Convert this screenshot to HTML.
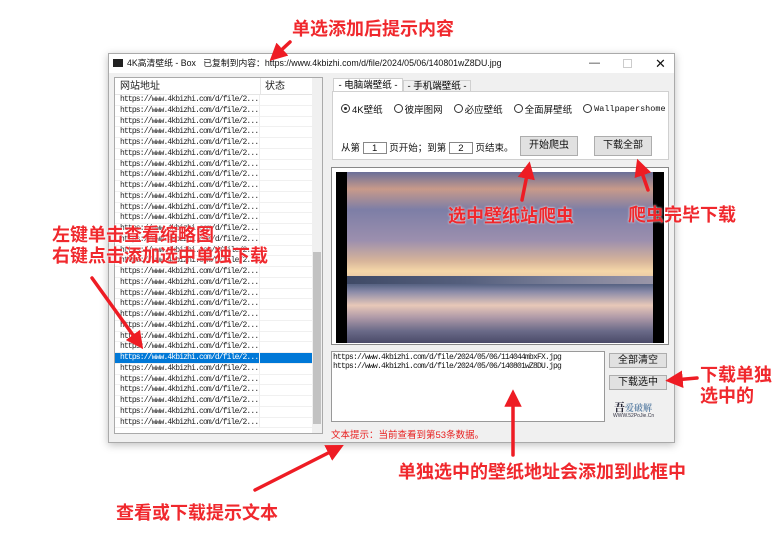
<!DOCTYPE html>
<html><head><meta charset="utf-8"><style>
*{margin:0;padding:0;box-sizing:border-box}
body{width:779px;height:540px;background:#fff;position:relative;overflow:hidden;font-family:"Liberation Sans","Noto Sans CJK SC",sans-serif}
.abs{position:absolute}
.win{left:108px;top:53px;width:567px;height:390px;background:#f0f0f0;border:1px solid #aaa;box-shadow:0 2px 8px rgba(0,0,0,.25)}
.tb{left:0;top:0;width:565px;height:19px;background:#fff;font-size:8.8px;color:#111;line-height:19px;white-space:nowrap}
.list{left:5px;top:23px;width:209px;height:357px;background:#fff;border:1px solid #aaa;overflow:hidden}
.row{height:10.75px;font-family:"Liberation Mono","Noto Sans CJK SC",monospace;font-size:8px;letter-spacing:-0.85px;line-height:10.75px;color:#222;padding-left:5px;width:197px;position:relative;border-bottom:1px solid #f0f0f0;white-space:nowrap;overflow:hidden}
.row:after{content:"";position:absolute;left:144px;top:0;bottom:0;border-left:1px solid #eee}
.sel{background:#0078d7;color:#fff}
.btn{background:#e1e1e1;border:1px solid #adadad;font-size:10px;text-align:center;color:#111}
.red{color:#f0282d;font-weight:bold;font-size:18px;font-family:"Noto Sans CJK SC",sans-serif;text-shadow:0 0 2px #fff;line-height:20px;white-space:nowrap}
.rad{font-size:9.5px;color:#111;display:inline-flex;align-items:center;margin-right:11px}
.rad i{display:inline-block;width:9px;height:9px;border:1px solid #333;border-radius:50%;margin-right:2px;position:relative}
.rad i.on:after{content:"";position:absolute;left:2px;top:2px;width:3px;height:3px;background:#333;border-radius:50%}
</style></head><body>
<div class="abs win">
 <div class="abs tb"><span style="display:inline-block;width:10px;height:8px;background:#222;margin:0 4px 0 4px;vertical-align:-1px"></span>4K高清壁纸 - Box &nbsp; 已复制到内容：https://www.4kbizhi.com/d/file/2024/05/06/140801wZ8DU.jpg
  <span class="abs" style="left:480px;top:0;color:#333;font-size:11px">—</span><span class="abs" style="left:514px;top:5px;width:9px;height:9px;border:1px solid #ccc"></span><span class="abs" style="left:546px;top:0;font-size:13px">✕</span></div>
 <div class="abs list">
  <div style="height:17px;font-size:10px;line-height:17px;color:#222;padding-left:5px;border-bottom:1px solid #e5e5e5;position:relative;width:197px">网站地址<span class="abs" style="left:150px;top:0">状态</span><span class="abs" style="left:145px;top:0;bottom:0;border-left:1px solid #e5e5e5"></span></div>
  <div id="rows"></div>
  <div class="abs" style="right:0;top:0;width:10px;height:355px;background:#f0f0f0"><div class="abs" style="left:1px;top:174px;width:8px;height:172px;background:#c2c2c2"></div></div>
 </div>
 <div class="abs" style="left:224px;top:24px;width:70px;height:14px;background:#fff;border:1px solid #d0d0d0;border-bottom:none;font-size:9.5px;text-align:center;line-height:13px">- 电脑端壁纸 -</div>
 <div class="abs" style="left:294px;top:26px;width:68px;height:12px;background:#f0f0f0;border:1px solid #d0d0d0;font-size:9.5px;text-align:center;line-height:11px">- 手机端壁纸 -</div>
 <div class="abs" style="left:223px;top:37px;width:337px;height:69px;background:#fff;border:1px solid #d0d0d0">
  <div class="abs" style="left:8px;top:8px;white-space:nowrap"><span class="rad"><i class="on"></i>4K壁纸</span><span class="rad"><i></i>彼岸图网</span><span class="rad"><i></i>必应壁纸</span><span class="rad"><i></i>全面屏壁纸</span><span class="rad" style="font-family:'Liberation Mono',monospace;font-size:8.5px"><i></i>Wallpapershome</span></div>
  <div class="abs" style="left:8px;top:48px;font-size:9.5px;color:#111;white-space:nowrap">从第 <span style="display:inline-block;width:24px;height:12px;border:1px solid #888;text-align:center;line-height:11px">1</span> 页开始；到第 <span style="display:inline-block;width:24px;height:12px;border:1px solid #888;text-align:center;line-height:11px">2</span> 页结束。</div>
  <div class="abs btn" style="left:187px;top:44px;width:58px;height:20px;line-height:18px">开始爬虫</div>
  <div class="abs btn" style="left:261px;top:44px;width:58px;height:20px;line-height:18px">下载全部</div>
 </div>
 <div class="abs" style="left:222px;top:113px;width:338px;height:178px;border:1px solid #888;background:#fff">
  <div class="abs" style="left:4px;top:4px;width:328px;height:171px;background:#000">
   <div class="abs" style="left:11px;top:0;width:306px;height:171px;background:linear-gradient(180deg,#6a6f98 0%,#c89a8a 10%,#7d7ea6 22%,#9c8fae 40%,#d7b49a 52%,#f5d7a8 58%,#e9c9a6 62%,#4e5878 62.5%,#5a6585 66%,#8a8aa8 70%,#e8c8b8 78%,#b09aa8 85%,#6a6a88 93%,#4a4a68 100%)"></div>
   <div class="abs" style="left:11px;top:104px;width:306px;height:8px;background:linear-gradient(90deg,#3f4a66,#56607e 40%,#7a7f98 70%,#9a96a8)"></div>
  </div>
 </div>
 <div class="abs" style="left:222px;top:297px;width:274px;height:71px;background:#fff;border:1px solid #999;font-family:'Liberation Mono',monospace;font-size:8px;letter-spacing:-0.8px;line-height:8.5px;padding:2px 1px;color:#111;white-space:nowrap;overflow:hidden">https://www.4kbizhi.com/d/file/2024/05/06/114044mbxFX.jpg<br>https://www.4kbizhi.com/d/file/2024/05/06/140801wZ8DU.jpg</div>
 <div class="abs btn" style="left:500px;top:299px;width:58px;height:15px;line-height:13px">全部清空</div>
 <div class="abs btn" style="left:500px;top:321px;width:58px;height:15px;line-height:13px">下载选中</div>
 <div class="abs" style="left:505px;top:345px;font-size:11px;color:#223;font-weight:bold;font-family:'Noto Serif CJK SC',serif">吾<span style="color:#68a;font-size:9px">爱破解</span></div>
 <div class="abs" style="left:504px;top:359px;font-size:5px;color:#334">WWW.52PoJie.Cn</div>
 <div class="abs" style="left:222px;top:373px;font-size:9.5px;color:#e82020">文本提示：当前查看到第53条数据。</div>
</div>
<script>
var h="";for(var i=0;i<31;i++){h+='<div class="row'+(i==24?' sel':'')+'">https://www.4kbizhi.com/d/file/2...</div>'}document.getElementById("rows").innerHTML=h;
</script>
<svg class="abs" style="left:0;top:0" width="779" height="540">
<defs><marker id="a" markerWidth="5" markerHeight="5" refX="2.5" refY="2.5" orient="auto"><path d="M0,0 L5,2.5 L0,5 Z" fill="#ee1c24"/></marker></defs>
<g stroke="#ee1c24" stroke-width="3.5" stroke-linecap="round" marker-end="url(#a)">
<line x1="290" y1="42" x2="276" y2="55"/>
<line x1="522" y1="200" x2="528" y2="170"/>
<line x1="648" y1="190" x2="640" y2="167"/>
<line x1="92" y1="278" x2="138" y2="342"/>
<line x1="697" y1="378" x2="674" y2="380"/>
<line x1="513" y1="455" x2="513" y2="398"/>
<line x1="255" y1="490" x2="336" y2="449"/>
</g></svg>
<div class="abs red" style="left:292px;top:18px">单选添加后提示内容</div>
<div class="abs red" style="left:448px;top:205px">选中壁纸站爬虫</div>
<div class="abs red" style="left:628px;top:204px">爬虫完毕下载</div>
<div class="abs red" style="left:52px;top:224px;line-height:21px">左键单击查看缩略图<br>右键点击添加选中单独下载</div>
<div class="abs red" style="left:700px;top:364px;line-height:21px">下载单独<br>选中的</div>
<div class="abs red" style="left:398px;top:461px">单独选中的壁纸地址会添加到此框中</div>
<div class="abs red" style="left:116px;top:502px">查看或下载提示文本</div>
</body></html>
